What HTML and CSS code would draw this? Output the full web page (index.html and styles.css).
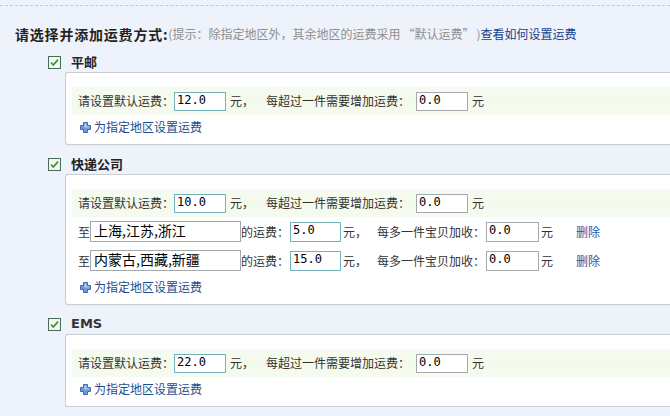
FILE: index.html
```html
<!DOCTYPE html>
<html lang="zh-CN">
<head>
<meta charset="utf-8">
<title>运费设置</title>
<link rel="stylesheet" href="styles.css">
</head>
<body>
<div class="page">
  <div class="title">
    <b class="title-main">请选择并添加运费方式:</b><span class="hint">(提示：除指定地区外，其余地区的运费采用<span class="q ql">“</span>默认运费<span class="q qr">”</span>)</span><a class="help" href="#">查看如何设置运费</a>
  </div>

  <div class="method first">
    <div class="head">
      <svg class="cb" width="13" height="13" viewBox="0 0 13 13"><rect x="0.5" y="0.5" width="12" height="12" fill="#eef3ee" stroke="#4a6b57"/><rect x="1.5" y="1.5" width="10" height="10" fill="#f6f9f4"/><path d="M3 6.5 L5.3 9 L10 3.6" fill="none" stroke="#2f9a36" stroke-width="1.8"/></svg>
      <span class="name">平邮</span>
    </div>
    <div class="card">
      <div class="row default">
        <span>请设置默认运费：</span><input class="num hi" value="12.0"><span class="unit">元，</span>
        <span class="extra">每超过一件需要增加运费：</span><input class="num" value="0.0"><span class="unit">元</span>
      </div>
      <div class="addrow">
        <svg class="plus" width="11" height="11" viewBox="0 0 11 11"><path d="M3.5 0.5 H7.5 V3.5 H10.5 V7.5 H7.5 V10.5 H3.5 V7.5 H0.5 V3.5 H3.5 Z" fill="#6f9ad8" stroke="#3b6cb4"/><path d="M4.5 1.5 H6.5 V4.5 H9.5 V5.5 H4.5 Z" fill="#b8d0f2"/></svg>
        <a href="#" class="add">为指定地区设置运费</a>
      </div>
    </div>
  </div>

  <div class="method">
    <div class="head">
      <svg class="cb" width="13" height="13" viewBox="0 0 13 13"><rect x="0.5" y="0.5" width="12" height="12" fill="#eef3ee" stroke="#4a6b57"/><rect x="1.5" y="1.5" width="10" height="10" fill="#f6f9f4"/><path d="M3 6.5 L5.3 9 L10 3.6" fill="none" stroke="#2f9a36" stroke-width="1.8"/></svg>
      <span class="name">快递公司</span>
    </div>
    <div class="card">
      <div class="row default">
        <span>请设置默认运费：</span><input class="num hi" value="10.0"><span class="unit">元，</span>
        <span class="extra">每超过一件需要增加运费：</span><input class="num" value="0.0"><span class="unit">元</span>
      </div>
      <div class="row region">
        <span>至</span><input class="area" value="上海,江苏,浙江"><span>的运费：</span><input class="num hi r" value="5.0"><span class="unit2">元，</span>
        <span class="extra2">每多一件宝贝加收：</span><input class="num r2" value="0.0"><span class="unit2">元</span>
        <a href="#" class="del">删除</a>
      </div>
      <div class="row region">
        <span>至</span><input class="area" value="内蒙古,西藏,新疆"><span>的运费：</span><input class="num hi r" value="15.0"><span class="unit2">元，</span>
        <span class="extra2">每多一件宝贝加收：</span><input class="num r2" value="0.0"><span class="unit2">元</span>
        <a href="#" class="del">删除</a>
      </div>
      <div class="addrow">
        <svg class="plus" width="11" height="11" viewBox="0 0 11 11"><path d="M3.5 0.5 H7.5 V3.5 H10.5 V7.5 H7.5 V10.5 H3.5 V7.5 H0.5 V3.5 H3.5 Z" fill="#6f9ad8" stroke="#3b6cb4"/><path d="M4.5 1.5 H6.5 V4.5 H9.5 V5.5 H4.5 Z" fill="#b8d0f2"/></svg>
        <a href="#" class="add">为指定地区设置运费</a>
      </div>
    </div>
  </div>

  <div class="method">
    <div class="head">
      <svg class="cb" width="13" height="13" viewBox="0 0 13 13"><rect x="0.5" y="0.5" width="12" height="12" fill="#eef3ee" stroke="#4a6b57"/><rect x="1.5" y="1.5" width="10" height="10" fill="#f6f9f4"/><path d="M3 6.5 L5.3 9 L10 3.6" fill="none" stroke="#2f9a36" stroke-width="1.8"/></svg>
      <span class="name ems">EMS</span>
    </div>
    <div class="card">
      <div class="row default">
        <span>请设置默认运费：</span><input class="num hi" value="22.0"><span class="unit">元，</span>
        <span class="extra">每超过一件需要增加运费：</span><input class="num" value="0.0"><span class="unit">元</span>
      </div>
      <div class="addrow">
        <svg class="plus" width="11" height="11" viewBox="0 0 11 11"><path d="M3.5 0.5 H7.5 V3.5 H10.5 V7.5 H7.5 V10.5 H3.5 V7.5 H0.5 V3.5 H3.5 Z" fill="#6f9ad8" stroke="#3b6cb4"/><path d="M4.5 1.5 H6.5 V4.5 H9.5 V5.5 H4.5 Z" fill="#b8d0f2"/></svg>
        <a href="#" class="add">为指定地区设置运费</a>
      </div>
    </div>
  </div>
</div>
</body>
</html>
```

FILE: styles.css
```css
html, body {
  margin: 0;
  padding: 0;
  background: #eef2fa;
  color: #333;
  font-family: "Noto Sans CJK SC", "Noto Sans", sans-serif;
  font-size: 12px;
  line-height: 16px;
  overflow: hidden;
}

.page {
  margin-top: 5px;
  border-top: 1px dashed #c4c8d0;
  padding-top: 18px;
}

.title {
  height: 20px;
  display: flex;
  align-items: center;
  padding-left: 15px;
  white-space: nowrap;
}

.title-main {
  font-size: 14px;
  font-weight: bold;
  color: #222;
  letter-spacing: 0.8px;
}

.hint {
  color: #8f8f8f;
  font-size: 12px;
}

.q {
  display: inline-block;
  width: 14px;
}

.ql {
  text-align: right;
}

.qr {
  text-align: left;
  margin-right: 0;
}

.help {
  color: #16418c;
  text-decoration: none;
  font-size: 12px;
}

.method {
  padding-left: 48px;
}

.head {
  height: 20px;
  display: flex;
  align-items: center;
  margin-top: 9px;
}

.method.first .head {
  margin-top: 8px;
}

.cb {
  display: block;
  flex: none;
}

.name {
  margin-left: 10px;
  font-size: 13px;
  font-weight: bold;
  color: #222;
}

.name.ems {
  font-family: "DejaVu Sans", sans-serif;
  font-weight: bold;
  color: #333;
}

.card {
  margin-left: 17px;
  background: #fff;
  border: 1px solid #c9cdd4;
  border-right: none;
  border-radius: 3px 0 0 3px;
  padding: 14px 0 5px 0;
  box-shadow: 0 1px 1px rgba(0, 0, 0, 0.04);
}

.row {
  display: flex;
  align-items: center;
  padding-left: 12px;
  white-space: nowrap;
}

.row.default {
  height: 28px;
  margin-left: 6px;
  padding-left: 6px;
  background: linear-gradient(to bottom, #f6fbf0, #f3faeb 50%, #f6fbf1);
}

.row.region {
  height: 29px;
}

input {
  box-sizing: border-box;
  margin: 0;
  color: #000;
  background: #fff;
  outline: none;
}

.num {
  width: 52px;
  height: 19px;
  border: 1px solid #a3a9ad;
  padding: 0 2px 3px 2px;
  font-family: "DejaVu Sans Mono", "Liberation Mono", monospace;
  font-size: 12px;
  line-height: 14px;
}

.num.hi {
  border-color: #73b1bd;
}

.num.r {
  margin-left: 1px;
  width: 51px;
  height: 20px;
}

.num.r2 {
  width: 53px;
  height: 20px;
}

.area {
  width: 151px;
  height: 21px;
  border: 1px solid #a3a9ad;
  padding: 0 3px 4px 3px;
  font-family: "Noto Sans CJK SC", sans-serif;
  font-size: 14px;
  line-height: 16px;
}

.unit {
  margin-left: 4px;
}

.extra {
  margin-left: 12px;
  margin-right: 6px;
}

.unit2 {
  margin-left: 2px;
}

.extra2 {
  margin-left: 10px;
  margin-right: 1px;
}

.del {
  margin-left: 23px;
  color: #1f58a8;
  text-decoration: none;
}

.addrow {
  height: 24px;
  display: flex;
  align-items: center;
  padding-left: 14px;
}

.plus {
  display: block;
  flex: none;
}

.add {
  margin-left: 3px;
  color: #1d4d8f;
  text-decoration: none;
}
```
